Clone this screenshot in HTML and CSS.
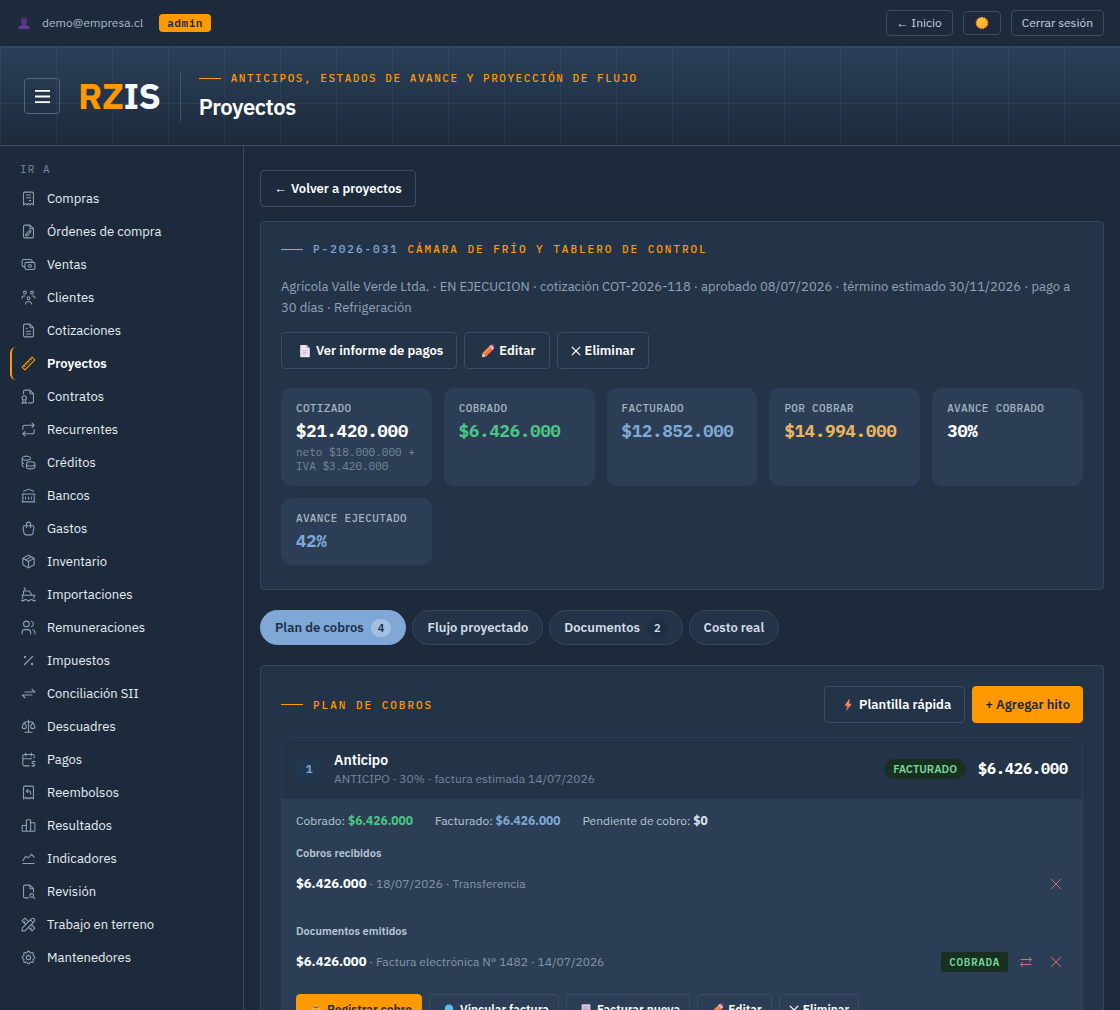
FILE: index.html
```html
<!DOCTYPE html>
<html lang="es">
<head>
<meta charset="utf-8">
<meta name="viewport" content="width=device-width, initial-scale=1">
<title>RZIS · Proyectos</title>
<link rel="stylesheet" href="styles.css">
</head>
<body>
<svg class="sprite" aria-hidden="true">
  <defs>
    <linearGradient id="g-person" x1="0" y1="0" x2="0" y2="1"><stop offset="0" stop-color="#4a2f74"/><stop offset="1" stop-color="#6a3f9c"/></linearGradient>
    <linearGradient id="g-sun" x1="0" y1="0" x2="1" y2="1"><stop offset="0" stop-color="#ffc94a"/><stop offset="1" stop-color="#f9a825"/></linearGradient>
    <linearGradient id="g-bolt" x1="0" y1="0" x2="0" y2="1"><stop offset="0" stop-color="#ffb54d"/><stop offset="1" stop-color="#f0526a"/></linearGradient>
    <symbol id="e-page" viewBox="0 0 16 16"><path d="M2.500 2a1 1 0 0 1 1-1h6.200l3.800 3.800V14a1 1 0 0 1-1 1h-9a1 1 0 0 1-1-1z" fill="#ece4f4"/><path d="M9.700 1v3a.8.8 0 0 0 .8.8h3z" fill="#b9a8d0"/><path d="M5.500 7.500h5M5.500 9.500h5M5.500 11.500h3.500" stroke="#c7b3d6" fill="none"/></symbol>
    <symbol id="e-pencil" viewBox="0 0 16 16"><path d="M1 15l1-5 4 4z" fill="#f6cfa4"/><path d="M2 10l7.500-7.500 4 4L6 14z" fill="#ff8a50"/><path d="M4 12l7.500-7.500 2 2L6 14z" fill="#f0703f"/><path d="M9.500 2.500L11 1l4 4-1.500 1.500z" fill="#e3dbe8"/><path d="M11 1q1.800-1 3.200.5T15 5z" fill="#f4567c"/></symbol>
    <symbol id="e-bolt" viewBox="0 0 16 16"><path d="M10 .5L4 8.800h3.200L5.500 15.500l7-9H9z" fill="url(#g-bolt)"/></symbol>
    <symbol id="e-person" viewBox="0 0 16 16"><path d="M8 1.500a3.600 3.600 0 0 1 3.600 3.800c0 1.800-.8 3.200-1.600 3.900v1.200c2.500.5 4.500 1.500 4.500 4.100h-13c0-2.600 2-3.600 4.500-4.100V9.200C5.200 8.500 4.400 7.100 4.400 5.300A3.600 3.600 0 0 1 8 1.500z" fill="url(#g-person)"/></symbol>
    <symbol id="e-sun" viewBox="0 0 16 16"><path d="M8 .6l1.500 1.300 1.900-.6.8 1.800 2 .4-.1 2 1.500 1.400-1 1.700.6 1.900-1.800.9-.4 2-2 0L9.600 15 8 14.200 6.100 15l-1.300-1.500-2-.1-.3-2-1.800-1 .7-1.900-1-1.700 1.500-1.400-.1-2 2-.3.9-1.800 1.900.6z" fill="#f08a1d"/><circle cx="8" cy="7.800" r="5.800" fill="url(#g-sun)"/></symbol>
    <symbol id="e-bag" viewBox="0 0 16 16"><path d="M6 4.500L5 1.800q3 1.200 6 0L10 4.500c3 1.500 4 4 4 6 0 3-2 4-6 4s-6-1-6-4c0-2 1-4.500 4-6z" fill="#f4b24b"/><path d="M5.500 4.800h5" stroke="#8a4b24" stroke-width="1.400"/><path d="M9.800 8.300q-3-1-3.300.4t1.800 1.300 1.500 1.500-3.500.3" stroke="#8a5220" fill="none"/></symbol>
    <symbol id="e-link" viewBox="0 0 16 16"><circle cx="8" cy="6.500" r="4.800" fill="#55c3ee"/><path d="M5.500 10.500h5V15h-5z" fill="#2f87c4"/></symbol>
    <symbol id="e-receipt" viewBox="0 0 16 16"><path d="M3 1.500h10V15l-2-1.300L9.500 15 8 13.700 6.500 15 5 13.700 3 15z" fill="#d6c9e2"/><path d="M5 4.500h6M5 7h6M5 9.500h4" stroke="#a68fbd"/></symbol>
    <symbol id="i-x" viewBox="0 0 12 12"><path d="M1 1l10 10M11 1L1 11"/></symbol>
    <symbol id="i-swap" viewBox="0 0 12 12"><path d="M.5 3.500h11M9 1l2.500 2.500L9 6M11.500 8.500H.5M3 6L.5 8.500 3 11"/></symbol>
  </defs>
</svg>

<header class="topbar">
  <div class="user">
    <svg class="emoji" aria-hidden="true"><use href="#e-person"/></svg>
    <span>demo@empresa.cl</span>
    <span class="role">admin</span>
  </div>
  <div class="session">
    <a class="btn-top" href="#inicio"><span class="arrow">←</span> Inicio</a>
    <button class="btn-top btn-theme" type="button" aria-label="Cambiar tema"><svg class="emoji" aria-hidden="true"><use href="#e-sun"/></svg></button>
    <button class="btn-top" type="button">Cerrar sesión</button>
  </div>
</header>

<div class="hero">
  <button class="menu" type="button" aria-label="Menú"><svg viewBox="0 0 16 16" aria-hidden="true"><path d="M0 2h16M0 8h16M0 14h16"/></svg></button>
  <div class="logo"><span class="logo-accent">RZ</span>IS</div>
  <div class="headline">
    <p class="eyebrow">Anticipos, estados de avance y proyección de flujo</p>
    <h1>Proyectos</h1>
  </div>
</div>

<div class="shell">
  <nav class="sidebar" aria-label="Ir a">
    <p class="nav-title">IR A</p>
    <a href="#compras"><svg viewBox="0 0 24 24"><path d="M5 21v-16a2 2 0 0 1 2 -2h10a2 2 0 0 1 2 2v16l-3 -2l-2 2l-2 -2l-2 2l-2 -2l-3 2m4 -14h6m-6 4h6m-2 4h2"/></svg>Compras</a>
    <a href="#ordenes"><svg viewBox="0 0 24 24"><path d="M14 3v4a1 1 0 0 0 1 1h4M17 21h-10a2 2 0 0 1 -2 -2v-14a2 2 0 0 1 2 -2h7l5 5v11a2 2 0 0 1 -2 2zM10 18l5 -5a1.414 1.414 0 0 0 -2 -2l-5 5v2h2z"/></svg>Órdenes de compra</a>
    <a href="#ventas"><svg viewBox="0 0 24 24"><path d="M7 11a2 2 0 0 1 2 -2h10a2 2 0 0 1 2 2v6a2 2 0 0 1 -2 2h-10a2 2 0 0 1 -2 -2zM12 14a2 2 0 1 0 4 0a2 2 0 1 0 -4 0M17 9v-2a2 2 0 0 0 -2 -2h-10a2 2 0 0 0 -2 2v6a2 2 0 0 0 2 2h2"/></svg>Ventas</a>
    <a href="#clientes"><svg viewBox="0 0 24 24"><path d="M10 13a2 2 0 1 0 4 0a2 2 0 0 0 -4 0M8 21v-1a2 2 0 0 1 2 -2h4a2 2 0 0 1 2 2v1M15 5a2 2 0 1 0 4 0a2 2 0 0 0 -4 0M17 10h2a2 2 0 0 1 2 2v1M5 5a2 2 0 1 0 4 0a2 2 0 0 0 -4 0M3 13v-1a2 2 0 0 1 2 -2h2"/></svg>Clientes</a>
    <a href="#cotizaciones"><svg viewBox="0 0 24 24"><path d="M14 3v4a1 1 0 0 0 1 1h4M17 21h-10a2 2 0 0 1 -2 -2v-14a2 2 0 0 1 2 -2h7l5 5v11a2 2 0 0 1 -2 2zM9 9h1M9 13h6M9 17h6"/></svg>Cotizaciones</a>
    <a href="#proyectos" class="active" aria-current="page"><svg viewBox="0 0 24 24"><path d="M17 3l4 4l-14 14l-4 -4zM16 7l-1.500 -1.500M13 10l-1.500 -1.500M10 13l-1.500 -1.500M7 16l-1.500 -1.500"/></svg>Proyectos</a>
    <a href="#contratos"><svg viewBox="0 0 24 24"><path d="M14 3v4a1 1 0 0 0 1 1h4M5 8v-3a2 2 0 0 1 2 -2h7l5 5v11a2 2 0 0 1 -2 2h-5M3 14a3 3 0 1 0 6 0a3 3 0 1 0 -6 0M4.500 17l-1.500 5l3 -1.500l3 1.500l-1.500 -5"/></svg>Contratos</a>
    <a href="#recurrentes"><svg viewBox="0 0 24 24"><path d="M4 12v-3a3 3 0 0 1 3 -3h13m-3 -3l3 3l-3 3M20 12v3a3 3 0 0 1 -3 3h-13m3 3l-3 -3l3 -3"/></svg>Recurrentes</a>
    <a href="#creditos"><svg viewBox="0 0 24 24"><path d="M9 14c0 1.657 2.686 3 6 3s6 -1.343 6 -3s-2.686 -3 -6 -3s-6 1.343 -6 3zM9 14v4c0 1.656 2.686 3 6 3s6 -1.344 6 -3v-4M3 6c0 1.072 1.144 2.062 3 2.598s4.144 .536 6 0c1.856 -.536 3 -1.526 3 -2.598c0 -1.072 -1.144 -2.062 -3 -2.598s-4.144 -.536 -6 0c-1.856 .536 -3 1.526 -3 2.598zM3 6v10c0 .888 .772 1.450 2 2M3 11c0 .888 .772 1.450 2 2"/></svg>Créditos</a>
    <a href="#bancos"><svg viewBox="0 0 24 24"><path d="M3 21h18M3 10h18M5 6l7 -3l7 3M4 10v11M20 10v11M8 14v3M12 14v3M16 14v3"/></svg>Bancos</a>
    <a href="#gastos"><svg viewBox="0 0 24 24"><path d="M6.331 8h11.339a2 2 0 0 1 1.977 2.304l-1.255 8.152a3 3 0 0 1 -2.966 2.544h-6.852a3 3 0 0 1 -2.965 -2.544l-1.255 -8.152a2 2 0 0 1 1.977 -2.304zM9 11v-5a3 3 0 0 1 6 0v5"/></svg>Gastos</a>
    <a href="#inventario"><svg viewBox="0 0 24 24"><path d="M12 3l8 4.500v9l-8 4.500l-8 -4.500v-9l8 -4.500M12 12l8 -4.500M12 12v9M12 12l-8 -4.500M16 5.250l-8 4.500"/></svg>Inventario</a>
    <a href="#importaciones"><svg viewBox="0 0 24 24"><path d="M2 20a2.400 2.400 0 0 0 2 1a2.400 2.400 0 0 0 2 -1a2.400 2.400 0 0 1 2 -1a2.400 2.400 0 0 1 2 1a2.400 2.400 0 0 0 2 1a2.400 2.400 0 0 0 2 -1a2.400 2.400 0 0 1 2 -1a2.400 2.400 0 0 1 2 1a2.400 2.400 0 0 0 2 1a2.400 2.400 0 0 0 2 -1M4 18l-1 -5h18l-2 4M5 13v-6h8l4 6M7 7v-4h-1"/></svg>Importaciones</a>
    <a href="#remuneraciones"><svg viewBox="0 0 24 24"><path d="M5 7a4 4 0 1 0 8 0a4 4 0 1 0 -8 0M3 21v-2a4 4 0 0 1 4 -4h4a4 4 0 0 1 4 4v2M16 3.130a4 4 0 0 1 0 7.750M21 21v-2a4 4 0 0 0 -3 -3.850"/></svg>Remuneraciones</a>
    <a href="#impuestos"><svg viewBox="0 0 24 24"><path d="M16 17a1 1 0 1 0 2 0a1 1 0 1 0 -2 0M6 7a1 1 0 1 0 2 0a1 1 0 1 0 -2 0M6 18l12 -12"/></svg>Impuestos</a>
    <a href="#conciliacion"><svg viewBox="0 0 24 24"><path d="M7 10h14l-4 -4M17 14h-14l4 4"/></svg>Conciliación SII</a>
    <a href="#descuadres"><svg viewBox="0 0 24 24"><path d="M7 20h10M6 6l6 -1l6 1M12 3v17M9 12l-3 -6l-3 6a3 3 0 0 0 6 0M21 12l-3 -6l-3 6a3 3 0 0 0 6 0"/></svg>Descuadres</a>
    <a href="#pagos"><svg viewBox="0 0 24 24"><path d="M13 21h-7a2 2 0 0 1 -2 -2v-12a2 2 0 0 1 2 -2h12a2 2 0 0 1 2 2v3M16 3v4M8 3v4M4 11h12.500M21 15h-2.500a1.500 1.500 0 0 0 0 3h1a1.500 1.500 0 0 1 0 3h-2.500M19 21v1m0 -8v1"/></svg>Pagos</a>
    <a href="#reembolsos"><svg viewBox="0 0 24 24"><path d="M5 21v-16a2 2 0 0 1 2 -2h10a2 2 0 0 1 2 2v16l-3 -2l-2 2l-2 -2l-2 2l-2 -2l-3 2M15 14v-2a2 2 0 0 0 -2 -2h-4l2 -2m0 4l-2 -2"/></svg>Reembolsos</a>
    <a href="#resultados"><svg viewBox="0 0 24 24"><path d="M3 13a1 1 0 0 1 1 -1h4a1 1 0 0 1 1 1v6a1 1 0 0 1 -1 1h-4a1 1 0 0 1 -1 -1zM15 9a1 1 0 0 1 1 -1h4a1 1 0 0 1 1 1v10a1 1 0 0 1 -1 1h-4a1 1 0 0 1 -1 -1zM9 5a1 1 0 0 1 1 -1h4a1 1 0 0 1 1 1v14a1 1 0 0 1 -1 1h-4a1 1 0 0 1 -1 -1zM4 20h14"/></svg>Resultados</a>
    <a href="#indicadores"><svg viewBox="0 0 24 24"><path d="M4 19h16M4 15l4 -6l4 2l4 -5l4 4"/></svg>Indicadores</a>
    <a href="#revision"><svg viewBox="0 0 24 24"><path d="M14 3v4a1 1 0 0 0 1 1h4M12 21h-5a2 2 0 0 1 -2 -2v-14a2 2 0 0 1 2 -2h7l5 5v4.500M14 17.500a2.500 2.500 0 1 0 5 0a2.500 2.500 0 1 0 -5 0M18.500 19.500l2.500 2.500"/></svg>Revisión</a>
    <a href="#terreno"><svg viewBox="0 0 24 24"><path d="M3 21h4l13 -13a1.500 1.500 0 0 0 -4 -4l-13 13v4M14.500 5.500l4 4M12 8l-5 -5l-4 4l5 5M7 8l-1.500 1.500M16 12l5 5l-4 4l-5 -5M16 17l-1.500 1.500"/></svg>Trabajo en terreno</a>
    <a href="#mantenedores"><svg viewBox="0 0 24 24"><path d="M10.325 4.317c.426 -1.756 2.924 -1.756 3.350 0a1.724 1.724 0 0 0 2.573 1.066c1.543 -.940 3.310 .826 2.370 2.370a1.724 1.724 0 0 0 1.065 2.572c1.756 .426 1.756 2.924 0 3.350a1.724 1.724 0 0 0 -1.066 2.573c.940 1.543 -.826 3.310 -2.370 2.370a1.724 1.724 0 0 0 -2.572 1.065c-.426 1.756 -2.924 1.756 -3.350 0a1.724 1.724 0 0 0 -2.573 -1.066c-1.543 .940 -3.310 -.826 -2.370 -2.370a1.724 1.724 0 0 0 -1.065 -2.572c-1.756 -.426 -1.756 -2.924 0 -3.350a1.724 1.724 0 0 0 1.066 -2.573c-.940 -1.543 .826 -3.310 2.370 -2.370c1 .608 2.296 .070 2.572 -1.065zM9 12a3 3 0 1 0 6 0a3 3 0 0 0 -6 0"/></svg>Mantenedores</a>
  </nav>

  <main class="content">
    <a class="btn" href="#proyectos"><span class="arrow">←</span>Volver a proyectos</a>

    <section class="card summary">
      <h2 class="section-title"><span><span class="code">P-2026-031</span> Cámara de frío y tablero de control</span></h2>
      <p class="meta">Agrícola Valle Verde Ltda. · EN EJECUCION · cotización COT-2026-118 · aprobado 08/07/2026 · término estimado 30/11/2026 · pago a 30 días · Refrigeración</p>
      <div class="actions">
        <button class="btn" type="button"><svg class="emoji" aria-hidden="true"><use href="#e-page"/></svg>Ver informe de pagos</button>
        <button class="btn" type="button"><svg class="emoji" aria-hidden="true"><use href="#e-pencil"/></svg>Editar</button>
        <button class="btn" type="button"><svg class="cross" aria-hidden="true"><use href="#i-x"/></svg>Eliminar</button>
      </div>
      <dl class="kpis">
        <div class="kpi"><dt>Cotizado</dt><dd>$21.420.000</dd><dd class="note">neto $18.000.000 + IVA $3.420.000</dd></div>
        <div class="kpi"><dt>Cobrado</dt><dd class="green">$6.426.000</dd></div>
        <div class="kpi"><dt>Facturado</dt><dd class="blue">$12.852.000</dd></div>
        <div class="kpi"><dt>Por cobrar</dt><dd class="amber">$14.994.000</dd></div>
        <div class="kpi"><dt>Avance cobrado</dt><dd>30%</dd></div>
        <div class="kpi"><dt>Avance ejecutado</dt><dd class="blue">42%</dd></div>
      </dl>
    </section>

    <div class="tabs" role="tablist">
      <button class="tab selected" type="button" role="tab" aria-selected="true">Plan de cobros<span class="count">4</span></button>
      <button class="tab" type="button" role="tab" aria-selected="false">Flujo proyectado</button>
      <button class="tab" type="button" role="tab" aria-selected="false">Documentos<span class="count">2</span></button>
      <button class="tab" type="button" role="tab" aria-selected="false">Costo real</button>
    </div>

    <section class="card plan">
      <div class="plan-head">
        <h2 class="section-title">Plan de cobros</h2>
        <div class="actions">
          <button class="btn" type="button"><svg class="emoji" aria-hidden="true"><use href="#e-bolt"/></svg>Plantilla rápida</button>
          <button class="btn primary" type="button">+ Agregar hito</button>
        </div>
      </div>

      <article class="milestone">
        <header class="milestone-head">
          <span class="number">1</span>
          <div class="milestone-name">
            <h3>Anticipo</h3>
            <p>ANTICIPO · 30% · factura estimada 14/07/2026</p>
          </div>
          <span class="pill">FACTURADO</span>
          <span class="amount">$6.426.000</span>
        </header>
        <div class="milestone-body">
          <div class="totals">
            <span>Cobrado: <b class="green">$6.426.000</b></span>
            <span>Facturado: <b class="blue">$6.426.000</b></span>
            <span>Pendiente de cobro: <b>$0</b></span>
          </div>
          <h4>Cobros recibidos</h4>
          <div class="entry">
            <p><b>$6.426.000</b> · 18/07/2026 · Transferencia</p>
            <button class="icon-btn" type="button" aria-label="Eliminar cobro"><svg aria-hidden="true"><use href="#i-x"/></svg></button>
          </div>
          <h4>Documentos emitidos</h4>
          <div class="entry">
            <p><b>$6.426.000</b> · Factura electrónica N° 1482 · 14/07/2026</p>
            <span class="state">COBRADA</span>
            <button class="icon-btn" type="button" aria-label="Mover documento"><svg aria-hidden="true"><use href="#i-swap"/></svg></button>
            <button class="icon-btn" type="button" aria-label="Eliminar documento"><svg aria-hidden="true"><use href="#i-x"/></svg></button>
          </div>
          <div class="actions">
            <button class="btn small primary" type="button"><svg class="emoji" aria-hidden="true"><use href="#e-bag"/></svg>Registrar cobro</button>
            <button class="btn small" type="button"><svg class="emoji" aria-hidden="true"><use href="#e-link"/></svg>Vincular factura</button>
            <button class="btn small" type="button"><svg class="emoji" aria-hidden="true"><use href="#e-receipt"/></svg>Facturar nueva</button>
            <button class="btn small" type="button"><svg class="emoji" aria-hidden="true"><use href="#e-pencil"/></svg>Editar</button>
            <button class="btn small" type="button"><svg class="cross" aria-hidden="true"><use href="#i-x"/></svg>Eliminar</button>
          </div>
        </div>
      </article>
    </section>
  </main>
</div>
</body>
</html>
```
FILE: styles.css
```css
:root {
  --bg: #1c2a3b;
  --card: #233449;
  --tile: #2b3e55;
  --line: #35485d;
  --text: #ffffff;
  --soft: #c9d5e2;
  --muted: #93a3b6;
  --faint: #76879c;
  --orange: #ff9900;
  --blue: #7fa8d6;
  --green: #4cc583;
  --amber: #edb55f;
  --red: #cf6b7c;
  --sans: "IBM Plex Sans", Roboto, "Liberation Sans", sans-serif;
  --mono: "IBM Plex Mono", "Liberation Mono", monospace;
}

* { box-sizing: border-box; }

body {
  display: flex;
  flex-direction: column;
  height: 100vh;
  margin: 0;
  overflow: hidden;
  background: var(--bg);
  color: var(--text);
  font: 400 13px/21px var(--sans);
}

h1, h2, h3, h4, p, dl, dd { margin: 0; }
a { color: inherit; text-decoration: none; }
button { font: inherit; color: inherit; cursor: pointer; }
svg { flex: none; }
.sprite { display: block; width: 0; height: 0; }

.green { color: var(--green); }
.blue { color: var(--blue); }
.amber { color: var(--amber); }

.emoji { width: 14px; height: 14px; }
.arrow { font-family: "Liberation Sans", sans-serif; font-weight: 400; }

/* Top bar */
.topbar {
  display: flex;
  flex: none;
  align-items: center;
  justify-content: space-between;
  padding: 10px 16px;
  border-bottom: 1px solid var(--line);
  font-size: 12px;
  line-height: 18px;
  color: var(--soft);
}
.user, .session { display: flex; align-items: center; }
.user { color: #aebccb; }
.session { gap: 10px; }
.user .emoji { margin: 0 11px 0 1px; }
.role {
  margin-left: 16px;
  padding: 0 8px;
  border-radius: 4px;
  background: var(--orange);
  color: var(--bg);
  font: 600 11px/18px var(--mono);
  letter-spacing: 0.05em;
}
.btn-top {
  padding: 3px 10px;
  border: 1px solid #3b4d62;
  border-radius: 4px;
  background: transparent;
}
.btn-theme { display: flex; padding: 4px 11px; }

/* Banner */
.hero {
  display: flex;
  flex: none;
  align-items: center;
  padding: 24px;
  border-bottom: 1px solid #3b4d62;
  background-image:
    linear-gradient(rgba(150, 180, 210, 0.08) 1px, transparent 1px),
    linear-gradient(90deg, rgba(150, 180, 210, 0.08) 1px, transparent 1px),
    linear-gradient(#2a4059, #1c2a3b);
  background-size: 56px 56px, 56px 56px, auto;
}
.menu {
  display: grid;
  place-items: center;
  width: 36px;
  height: 36px;
  padding: 0;
  border: 1px solid #51667e;
  border-radius: 4px;
  background: transparent;
}
.menu svg { width: 15px; height: 15px; stroke: #fff; stroke-width: 2; }
.logo {
  margin-left: 18px;
  font-size: 36px;
  font-weight: 700;
  line-height: 44px;
  letter-spacing: -0.01em;
  color: #f4f8fc;
}
.logo-accent { color: var(--orange); }
.headline {
  margin-left: 19px;
  padding-left: 18px;
  border-left: 1px solid #40546b;
}
.eyebrow, .section-title {
  display: flex;
  align-items: center;
  gap: 10px;
  font: 500 11px/14px var(--mono);
  text-transform: uppercase;
  color: var(--orange);
}
.eyebrow { letter-spacing: 0.14em; }
.section-title { letter-spacing: 0.18em; }
.eyebrow::before, .section-title::before {
  content: "";
  width: 22px;
  height: 1px;
  background: var(--orange);
}
h1 {
  margin-top: 8px;
  font-size: 22px;
  font-weight: 600;
  line-height: 28px;
  letter-spacing: -0.02em;
}

/* Navigation */
.shell { display: flex; flex: 1; min-height: 0; }
.sidebar {
  flex: none;
  width: 244px;
  padding: 14px 10px;
  border-right: 1px solid var(--line);
  overflow: hidden;
}
.nav-title {
  padding: 0 10px 4px;
  font: 400 11px/18px var(--mono);
  letter-spacing: 0.1em;
  color: var(--faint);
}
.sidebar a {
  display: flex;
  align-items: center;
  gap: 10px;
  padding: 6px 8px;
  border-left: 2px solid transparent;
  border-radius: 6px;
  color: #e8eef4;
}
.sidebar a svg {
  width: 17px;
  height: 17px;
  fill: none;
  stroke: #8ea1b6;
  stroke-width: 1.5;
  stroke-linecap: round;
  stroke-linejoin: round;
}
.sidebar a.active { border-left-color: var(--orange); font-weight: 600; color: #fff; }
.sidebar a.active svg { stroke: var(--orange); }

/* Content */
.content {
  flex: 1;
  min-width: 0;
  padding: 24px 16px;
  overflow-y: auto;
  scrollbar-width: none;
}
.btn {
  display: inline-flex;
  align-items: center;
  gap: 4px;
  padding: 8px 13px;
  border: 1px solid #3b4d62;
  border-radius: 4px;
  background: transparent;
  font-weight: 600;
  line-height: 19px;
}
.btn .emoji { margin-left: 3px; }
.btn .cross { width: 10px; height: 10px; stroke: #fff; stroke-width: 1.5; }
.btn.primary { padding: 8px 12px; border-color: var(--orange); background: var(--orange); color: var(--bg); }
.btn.small { padding: 5px 9px; font-size: 12px; }
.actions { display: flex; flex-wrap: wrap; gap: 7px; }

.card {
  padding: 20px;
  border: 1px solid #33475d;
  border-radius: 4px;
  background: var(--card);
}
.content > .btn { display: flex; width: max-content; }
.summary { margin-top: 14px; padding-bottom: 24px; }
.code { color: var(--blue); }
.meta { margin: 20px 0 14px; color: var(--muted); }
.kpis {
  display: grid;
  grid-template-columns: repeat(auto-fill, minmax(150px, 1fr));
  gap: 12px;
  margin-top: 19px;
}
.kpi { padding: 14px 15px 13px; border-radius: 10px; background: var(--tile); font-family: var(--mono); }
.kpi dt {
  font-size: 11px;
  font-weight: 500;
  line-height: 13px;
  letter-spacing: 0.03em;
  text-transform: uppercase;
  color: #a5b4c5;
}
.kpi dd { margin-top: 5px; font-size: 17px; font-weight: 700; line-height: 22px; }
.kpi .note { margin-top: 3px; font-size: 11px; font-weight: 400; line-height: 14px; color: var(--faint); }

.tabs { display: flex; flex-wrap: wrap; gap: 6px; margin: 20px 0; }
.tab {
  display: flex;
  align-items: center;
  gap: 7px;
  padding: 6px 14px;
  border: 1px solid #35485f;
  border-radius: 18px;
  background: var(--card);
  font-weight: 600;
  color: #d3dde8;
}
.tab.selected { border-color: var(--blue); background: var(--blue); color: #1d3049; }
.count {
  padding: 0 7px;
  border-radius: 9px;
  background: #1e2d41;
  font-size: 11px;
  line-height: 18px;
}
.selected .count { background: #a3c0e0; }

.plan-head { display: flex; align-items: center; justify-content: space-between; margin-bottom: 14px; }
.milestone { border: 1px solid var(--tile); border-radius: 10px; overflow: hidden; }
.milestone-head { display: flex; align-items: center; gap: 12px; padding: 12px 14px 11px; }
.number {
  width: 26px;
  border-radius: 13px;
  background: #21374f;
  color: var(--blue);
  font: 600 12px/26px var(--mono);
  text-align: center;
}
.milestone-name { flex: 1; }
.milestone-name h3 { font-size: 14px; font-weight: 600; line-height: 20px; }
.milestone-name p { font-size: 12px; line-height: 18px; color: var(--faint); }
.pill {
  padding: 0 9px;
  border-radius: 10px;
  background: #17301f;
  color: #7ad69c;
  font-size: 11px;
  font-weight: 600;
  line-height: 20px;
}
.amount { font: 700 15px/20px var(--mono); }

.milestone-body { padding: 12px 14px 16px; background: var(--tile); }
.totals { display: flex; flex-wrap: wrap; gap: 22px; font-size: 12px; line-height: 20px; color: #b9c7d6; }
.totals b { font-weight: 700; }
.totals b:not([class]) { color: #dbe5ef; }
h4 { margin-top: 13px; font-size: 11px; font-weight: 600; line-height: 18px; color: #b9c7d6; }
.entry { display: flex; align-items: center; gap: 6px; margin-top: 7px; }
.entry + h4 { margin-top: 23px; }
.entry p { flex: 1; font-size: 12px; line-height: 30px; color: #8698ac; }
.entry b { font-size: 13px; font-weight: 700; color: #fff; }
.state {
  padding: 0 8px;
  border-radius: 3px;
  background: #17301f;
  color: #74d399;
  font: 600 11px/20px var(--mono);
  letter-spacing: 0.06em;
}
.icon-btn {
  display: grid;
  place-items: center;
  width: 24px;
  height: 24px;
  padding: 0;
  border: 0;
  background: transparent;
}
.icon-btn svg { width: 12px; height: 12px; fill: none; stroke: var(--red); }
.milestone-body .actions { margin-top: 17px; }
```
